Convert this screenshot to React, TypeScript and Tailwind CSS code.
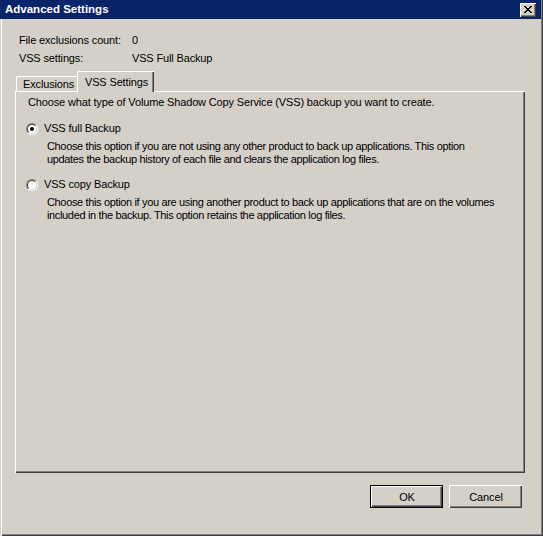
const FONT = "font-['Liberation_Sans',Arial,sans-serif]"

const XROWS = ['11000011', '01100110', '00111100', '00011000', '00111100', '01100110', '11000011']

function CloseGlyph() {
  return (
    <svg width="8" height="7" viewBox="0 0 8 7" shapeRendering="crispEdges">
      {XROWS.map((row, y) =>
        row.split('').map((c, x) => (c === '1' ? <rect key={`${x}-${y}`} x={x} y={y} width="1" height="1" fill="#000" /> : null))
      )}
    </svg>
  )
}

function Radio({ checked }: { checked?: boolean }) {
  return (
    <div className="w-[12px] h-[12px] rounded-full border border-t-[#808080] border-l-[#808080] border-b-white border-r-white shrink-0">
      <div className="w-full h-full rounded-full border border-t-[#404040] border-l-[#404040] border-b-[#d4d0c8] border-r-[#d4d0c8] bg-white flex items-center justify-center">
        {checked && <div className="w-[4px] h-[4px] rounded-full bg-black" />}
      </div>
    </div>
  )
}

function Option({ label, lines, checked }: { label: string; lines: string[]; checked?: boolean }) {
  return (
    <div>
      <div className="flex items-center h-[13px]">
        <div className="ml-[10px]">
          <Radio checked={checked} />
        </div>
        <span className="ml-[6px]">{label}</span>
      </div>
      <div className="ml-[31px] mt-[5px] leading-[13px] whitespace-nowrap tracking-[-0.35px]">
        {lines.map(l => (
          <div key={l}>{l}</div>
        ))}
      </div>
    </div>
  )
}

function Button({ children, primary }: { children: string; primary?: boolean }) {
  return (
    <div className={`w-[73px] h-[23px] ${primary ? 'border border-black' : ''}`}>
      <div className="w-full h-full bg-[#d4d0c8] border-t border-l border-white shadow-[inset_-1px_-1px_#404040,inset_-2px_-2px_#808080] flex items-center justify-center">
        {children}
      </div>
    </div>
  )
}

export default function App() {
  return (
    <div className={`w-[543px] h-[536px] bg-[#d4d0c8] flex flex-col text-[11px] tracking-[-0.15px] text-black ${FONT} shadow-[inset_1px_0_#d4d0c8,inset_2px_0_#fff,inset_-1px_-1px_#404040,inset_-2px_-2px_#808080]`}>
      {/* title bar */}
      <div className="h-[19px] bg-[#0a246a] flex items-center justify-between pl-[5px] pr-[5px] mr-[2px]">
        <span className="text-white font-bold text-[11.5px] tracking-normal leading-none">Advanced Settings</span>
        <div className="w-[16px] h-[14px] bg-[#d4d0c8] border-t border-l border-white shadow-[inset_-1px_-1px_#404040,inset_-2px_-2px_#808080] flex items-center justify-center pr-[1px] pb-[1px]">
          <CloseGlyph />
        </div>
      </div>

      <div className="flex-1 flex flex-col pl-[15px] pr-[18px]">
        {/* summary */}
        <div className="pt-[12px] pl-[4px]">
          <div className="flex h-[18px] items-center">
            <span className="w-[113px]">File exclusions count:</span>
            <span>0</span>
          </div>
          <div className="flex h-[18px] items-center">
            <span className="w-[113px]">VSS settings:</span>
            <span>VSS Full Backup</span>
          </div>
        </div>

        {/* tabs */}
        <div className="h-[24px] flex items-end pl-[1px]">
          <div className="h-[15px] w-[61px] border-t border-l border-white rounded-tl-[2px] flex items-center pl-[6px] pt-[1px]">
            Exclusions
          </div>
          <div className="relative z-10 -mb-px h-[21px] w-[77px] bg-[#d4d0c8] border-t border-l border-white rounded-tl-[2px] shadow-[inset_-1px_0_#404040,inset_-2px_0_#808080] flex items-start pl-[7px] pt-[2px]">
            VSS Settings
          </div>
        </div>

        {/* panel */}
        <div className="h-[382px] border-t border-l border-white shadow-[inset_-1px_-1px_#404040,inset_-2px_-2px_#808080] pt-[4px] pl-[12px]">
          <div className="leading-[13px]">Choose what type of Volume Shadow Copy Service (VSS) backup you want to create.</div>
          <div className="mt-[13px] flex flex-col gap-[12px] -ml-[12px]">
            <Option
              checked
              label="VSS full Backup"
              lines={[
                'Choose this option if you are not using any other product to back up applications. This option',
                'updates the backup history of each file and clears the application log files.',
              ]}
            />
            <Option
              label="VSS copy Backup"
              lines={[
                'Choose this option if you are using another product to back up applications that are on the volumes',
                'included in the backup. This option retains the application log files.',
              ]}
            />
          </div>
        </div>

        {/* buttons */}
        <div className="flex justify-end gap-[6px] mt-[12px] pr-[3px]">
          <Button primary>OK</Button>
          <Button>Cancel</Button>
        </div>
      </div>
    </div>
  )
}
